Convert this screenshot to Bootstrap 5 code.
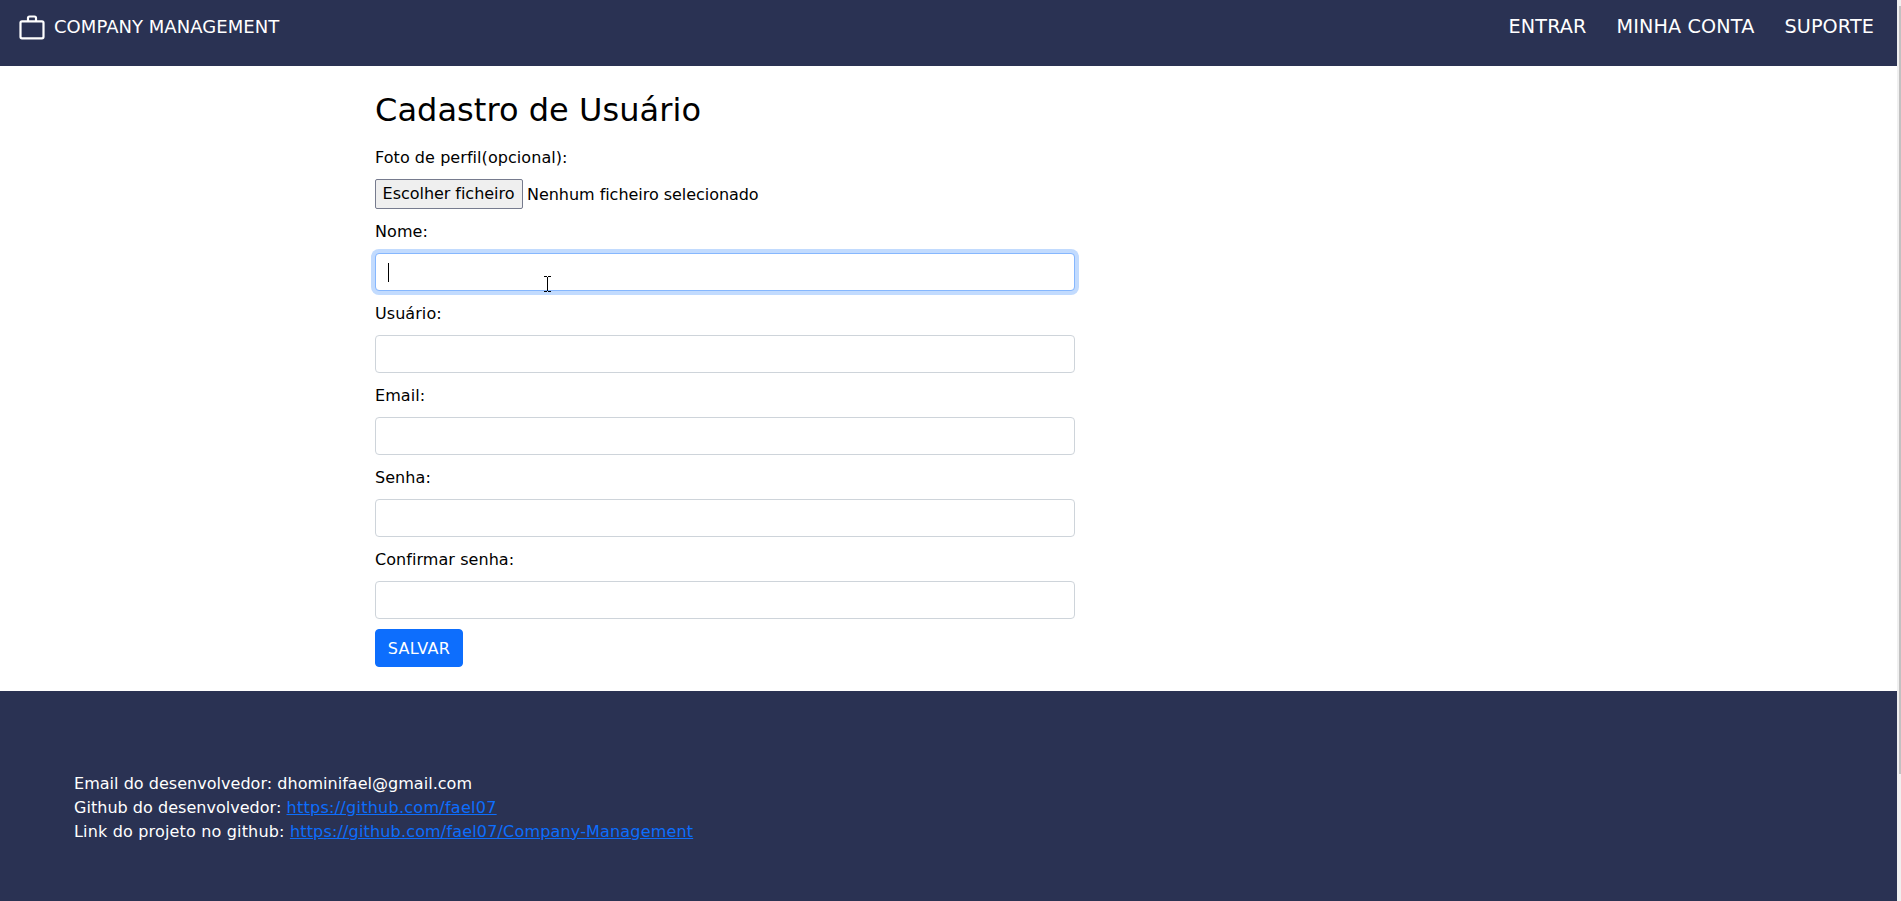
<!DOCTYPE html>
<html lang="pt">
<head>
<meta charset="utf-8">
<title>Company Management</title>
<link href="https://cdn.jsdelivr.net/npm/bootstrap@5.3.0/dist/css/bootstrap.min.css" rel="stylesheet">
<style>
body{font-family:Verdana,"DejaVu Sans",sans-serif;font-size:16px;color:#000;overflow:hidden}
.page{height:901px}
.navy{background:#2a3253;color:#fff}
.top-bar{height:66px;padding:10px 23px 0 19px}
.brand-name{font-size:18px;line-height:34px;letter-spacing:.04px}
.brand-icon{margin:4px 9px 0 0}
.menu-links{gap:30px;font-size:19.2px;line-height:34px;letter-spacing:.13px}
.menu-links a,.brand-name{color:#fff;text-decoration:none}
.form-area{width:700px;margin:25px 0 24px 375px}
.form-area h1{font-size:32px;line-height:39px;height:38px;font-weight:400;letter-spacing:.05px;margin-bottom:16px}
.form-area label{display:block;line-height:25px;height:24px;letter-spacing:.06px;margin-bottom:10px}
.form-area .form-control{height:38px;border:1px solid #ced4da;border-radius:4px;margin-bottom:10px;padding:0 12px}
.form-area .form-control.active-field{border-color:#86b7fe;box-shadow:0 0 0 4px #c2dbfe}
.file-row{height:30px;margin-bottom:10px;line-height:31px;gap:4px;letter-spacing:-.04px}
.file-btn{width:148px;height:30px;border:1px solid #767b8e;border-radius:2px;background:#efefef;padding:0 1px 0 0;line-height:26px;letter-spacing:inherit;color:#000}
.btn-save{width:88px;height:38px;border-radius:4px;padding:1px 0 0;letter-spacing:.35px;background:#0d6efd}
.caret{left:13px;top:10px;width:1px;height:19px;background:#000}
.pointer{left:169px;top:23px}
.foot{padding:81px 74px 0}
.foot a{color:#0d6efd}
.dev-line{letter-spacing:.03px}
.dev-line a{letter-spacing:.27px}
.repo-line{letter-spacing:.17px}
.track{width:4px;background:#f0f0f0;padding:6px 0 0 2px}
.thumb{height:768px;background:#c1c1c1}
</style>
<script src="https://cdn.jsdelivr.net/npm/bootstrap@5.3.0/dist/js/bootstrap.bundle.min.js"></script>
</head>
<body>
<div class="page d-flex">
<div class="flex-grow-1 d-flex flex-column">
<nav class="navy top-bar d-flex justify-content-between align-items-start">
<a class="brand-name d-flex" href="#"><svg width="26" height="26" viewBox="0 0 26 26" class="brand-icon flex-shrink-0" fill="none" stroke="#fff" stroke-width="2.2"><rect x="1.500" y="7.300" width="23" height="17" rx="1.5"/><path d="M9 7V4Q9 2.500 10.500 2.500H15.500Q17 2.500 17 4V7"/></svg><span>COMPANY MANAGEMENT</span></a>
<div class="menu-links d-flex"><a href="#">ENTRAR</a><a href="#">MINHA CONTA</a><a href="#">SUPORTE</a></div>
</nav>
<main class="form-area">
<h1>Cadastro de Usuário</h1>
<label>Foto de perfil(opcional):</label>
<div class="file-row d-flex"><button class="file-btn" type="button">Escolher ficheiro</button><span>Nenhum ficheiro selecionado</span></div>
<label for="nome">Nome:</label>
<div class="position-relative"><input id="nome" class="form-control active-field"><span class="caret position-absolute"></span>
<svg class="pointer position-absolute" width="7" height="17" fill="#000" shape-rendering="crispEdges"><path d="M0 0H3V1H4V0H7V1H4V15H7V16H4V15H3V16H0V15H3V1H0Z"/></svg></div>
<label for="usuario">Usuário:</label><input id="usuario" class="form-control">
<label for="email">Email:</label><input id="email" class="form-control">
<label for="senha">Senha:</label><input id="senha" type="password" class="form-control">
<label for="confirma">Confirmar senha:</label><input id="confirma" type="password" class="form-control">
<button class="btn btn-primary btn-save d-block" type="button">SALVAR</button>
</main>
<footer class="navy foot flex-grow-1">
<div class="dev-line">Email do desenvolvedor: dhominifael@gmail.com</div>
<div class="dev-line">Github do desenvolvedor: <a href="#">https://github.com/fael07</a></div>
<div class="repo-line">Link do projeto no github: <a href="#">https://github.com/fael07/Company-Management</a></div>
</footer>
</div>
<div class="track"><div class="thumb"></div></div>
</div>
</body>
</html>
